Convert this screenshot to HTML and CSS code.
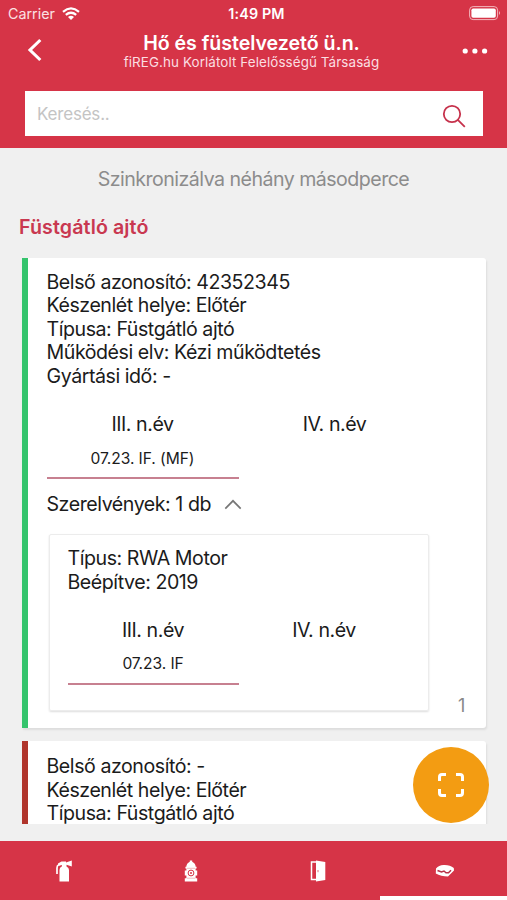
FILE: index.html
```html
<!DOCTYPE html>
<html lang="hu">
<head>
<meta charset="utf-8">
<title>Hő és füstelvezető ü.n.</title>
<link rel="stylesheet" href="styles.css">
</head>
<body>
<div class="app">
  <header class="header">
    <div class="status">
      <div class="carrier"><span class="carrier-name">Carrier</span>
        <svg width="18" height="13" viewBox="0 0 18 13" fill="none" stroke="#fff" stroke-width="2.2"><path d="M1 4.8Q9-2 17 4.8M3.8 7.9Q9 3.6 14.2 7.9"/><path d="M6 10Q9 7.6 12 10L9 13Z" fill="#fff" stroke="none"/></svg>
      </div>
      <span class="clock">1:49 PM</span>
      <svg class="battery" width="32" height="15" viewBox="0 0 32 15"><rect x=".6" y=".6" width="28" height="13" rx="3.5" fill="none" stroke="#f3b5bc" stroke-width="1"/><rect x="2.4" y="2.4" width="24.4" height="9.4" rx="1.8" fill="#fff"/><path d="M30 5q2 2 0 4z" fill="#f3b5bc"/></svg>
    </div>
    <div class="nav">
      <svg class="back" width="16" height="24" viewBox="0 0 16 24" fill="none" stroke="#fff" stroke-width="3.1"><path d="M13.3 2L3 12l10.3 10"/></svg>
      <div class="titles">
        <h1 class="title">Hő és füstelvezető ü.n.</h1>
        <div class="subtitle">fiREG.hu Korlátolt Felelősségű Társaság</div>
      </div>
      <svg class="more" width="26" height="6" viewBox="0 0 26 6" fill="#fff"><circle cx="3.2" cy="3" r="2.6"/><circle cx="12.9" cy="3" r="2.6"/><circle cx="22.6" cy="3" r="2.6"/></svg>
    </div>
    <div class="search">
      <span class="placeholder">Keresés..</span>
      <svg width="24" height="24" viewBox="0 0 24 24" fill="none" stroke="#c6314b" stroke-width="1.8"><circle cx="10" cy="10" r="8.2"/><path d="M15.8 15.8l7 7"/></svg>
    </div>
  </header>

  <main class="content">
    <div class="sync"><span class="sync-text">Szinkronizálva néhány másodperce</span></div>
    <h2 class="section">Füstgátló ajtó</h2>

    <article class="card ok">
      <div class="lines">
        <div>Belső azonosító: 42352345</div>
        <div>Készenlét helye: Előtér</div>
        <div>Típusa: Füstgátló ajtó</div>
        <div>Működési elv: Kézi működtetés</div>
        <div>Gyártási idő: -</div>
      </div>
      <div class="quarters">
        <div class="quarter done"><div>III. n.év</div><div class="stamp">07.23. IF. (MF)</div></div>
        <div class="quarter"><div>IV. n.év</div></div>
      </div>
      <div class="fittings"><span>Szerelvények: 1 db</span>
        <svg width="18" height="11" viewBox="0 0 18 11" fill="none" stroke="#777" stroke-width="1.7"><path d="M1.3 9.6L9 1.8l7.7 7.8"/></svg>
      </div>
      <div class="fitting-row">
        <section class="fitting">
          <div class="lines"><div>Típus: RWA Motor</div><div>Beépítve: 2019</div></div>
          <div class="quarters">
            <div class="quarter done"><div>III. n.év</div><div class="stamp">07.23. IF</div></div>
            <div class="quarter"><div>IV. n.év</div></div>
          </div>
        </section>
        <span class="count">1</span>
      </div>
    </article>

    <article class="card bad">
      <div class="lines">
        <div>Belső azonosító: -</div>
        <div>Készenlét helye: Előtér</div>
        <div>Típusa: Füstgátló ajtó</div>
      </div>
    </article>
  </main>

  <button class="fab" aria-label="Kód beolvasása">
    <svg width="28" height="26" viewBox="0 0 28 26" fill="none" stroke="#fff" stroke-width="3"><path d="M2.5 9V5q0-2.500 2.500-2.500H9M19 2.500h4q2.500 0 2.500 2.500v4M25.500 17v4q0 2.500-2.500 2.500h-4M9 23.500H5Q2.500 23.500 2.500 21v-4"/></svg>
  </button>

  <nav class="tabs">
    <div class="tab"><svg width="18" height="22" viewBox="0 0 18 22"><path d="M5.500 5H3.500Q2 5.500 2 8v6" fill="none" stroke="#fff" stroke-width="1.700"/><path d="M3 3.500L6.500 1.500H11v1L16.800.5v6L11.500 4.800v1.700q2.500 1 2.500 3.500V21.500H4.500V10q0-2.400 2.300-3.400V5H3Z" fill="#fff"/></svg></div>
    <div class="tab"><svg width="14" height="22" viewBox="0 0 14 22"><path d="M5.800.5h2.400v1.200Q11.500 3.200 11.700 6.800H12.600v1.700h-1v2h1.600v5h-1.600v2.700H13.200V21.500H.8V18.200h1.600v-2.700H.8v-5h1.600v-2h-1V6.800h.9Q2.500 3.200 5.800 1.700Z" fill="#fff"/><circle cx="7" cy="13" r="2.900" fill="none" stroke="#d63447" stroke-width="1"/><circle cx="7" cy="13" r="1" fill="#d63447"/><path d="M3 8.300h8M3 18.200h8" stroke="#e68a94" stroke-width=".6"/></svg></div>
    <div class="tab"><svg width="16" height="22" viewBox="0 0 16 22"><path d="M6 2H1.500v17.500H6" fill="none" stroke="#fff" stroke-width="1.500"/><path d="M6 .5L15.300 2v18L6 21.500Z" fill="#fff"/><path d="M8 10v2.200" stroke="#d63447" stroke-width=".7"/></svg></div>
    <div class="tab active"><svg width="20" height="14" viewBox="0 0 20 14"><path d="M1 4.500Q4 .8 9 1q6-.2 9.800 3L19 6.500l-6 6Q6 12.500.8 9.500Z" fill="#fff"/><path d="M2.500 6.500l4 1.500 2.500-1 2 1.800h2.500l2.500-2.600" fill="none" stroke="#b83248" stroke-width="1.500"/></svg></div>
  </nav>
</div>
</body>
</html>
```
FILE: styles.css
```css
* { box-sizing: border-box; }
body { margin: 0; font-family: Inter, "Liberation Sans", sans-serif; font-size: 19.6px; letter-spacing: -.45px; color: #1b1b1b; }
h1, h2 { margin: 0; }
svg { display: block; flex: none; }
.app { position: relative; display: flex; flex-direction: column; width: 507px; height: 900px; overflow: hidden; background: #f0f0f0; }

.header { flex: none; height: 148px; background: #d63447; color: #fff; }
.status { display: grid; grid-template-columns: 1fr auto 1fr; align-items: center; height: 27px; padding: 0 6px 0 8px; }
.carrier { display: flex; align-items: center; gap: 7px; font-size: 14.3px; letter-spacing: 0; color: #fbe0e3; }
.clock { position: relative; left: 2px; font-size: 14.3px; font-weight: 600; letter-spacing: .15px; }
.battery { justify-self: end; }
.nav { display: grid; grid-template-columns: 60px 1fr 60px; align-items: center; height: 46px; }
.back { margin-left: 27px; }
.more { margin-left: 15px; margin-top: 2px; }
.titles { text-align: center; white-space: nowrap; margin-top: 3px; margin-left: -4px; }
.title { font-size: 19.6px; font-weight: 600; line-height: 22px; letter-spacing: -.04px; }
.subtitle { font-size: 13.4px; line-height: 17px; letter-spacing: .1px; color: #fbdfe2; }
.search { display: flex; align-items: center; justify-content: space-between; width: 458px; height: 45px; margin: 18px 0 0 25px; padding: 0 17px 0 12px; background: #fff; }
.search svg { margin-top: 4px; }
.placeholder { font-size: 17px; letter-spacing: -.2px; color: #c4c4c4; }

.content { flex: none; height: 676px; overflow: hidden; padding-left: 22px; }
.sync { padding-top: 19px; line-height: 24px; text-align: center; margin-left: -22px; letter-spacing: -.53px; color: #8c8c8c; }
.section { margin: 24px 0 0 -3px; font-size: 19.6px; line-height: 24px; font-weight: 600; letter-spacing: .12px; color: #c93850; }

.card { width: 464px; background: #fff; border-left: 6px solid #35c46d; border-radius: 0 3px 3px 0; padding: 12.500px 0 0 18.500px; box-shadow: 1px 2px 2px #ddd; }
.ok { height: 470px; margin-top: 19px; }
.bad { height: 110px; margin-top: 13px; padding-top: 14px; border-left-color: #b0352c; }
.lines { line-height: 23.65px; white-space: nowrap; }
.quarters { display: flex; margin-top: 23.500px; line-height: 24px; }
.quarter { width: 192px; height: 67px; text-align: center; border-bottom: 2px solid transparent; }
.done { border-bottom-color: #c78090; }
.stamp { margin-top: 10.500px; font-size: 15.6px; letter-spacing: -.08px; }
.fittings { display: flex; align-items: center; gap: 13px; height: 50px; }
.fitting-row { display: flex; align-items: flex-end; margin-top: 5px; }
.fitting { width: 380px; height: 177px; margin-left: 2px; padding: 12px 0 0 18px; border: 1px solid #ececec; border-radius: 2px; box-shadow: 0 1px 2px #ddd; }
.fitting .quarter { width: 171px; }
.fitting .quarters { margin-top: 23px; }
.count { margin-left: 29.500px; line-height: 24px; margin-bottom: -7px; color: #888; font-size: 18px; }

.fab { position: absolute; left: 413px; top: 747px; width: 76px; height: 76px; display: grid; place-items: center; border: 0; border-radius: 50%; padding: 0; background: #f39c12; }
.fab svg { margin-right: 1px; }
.tabs { display: flex; height: 59px; margin-top: auto; background: #d63447; }
.tab { flex: 1; display: grid; place-items: center; border-bottom: 4px solid transparent; padding: 4px 0 0 2px; }
.active { border-bottom-color: #fff; }
```
